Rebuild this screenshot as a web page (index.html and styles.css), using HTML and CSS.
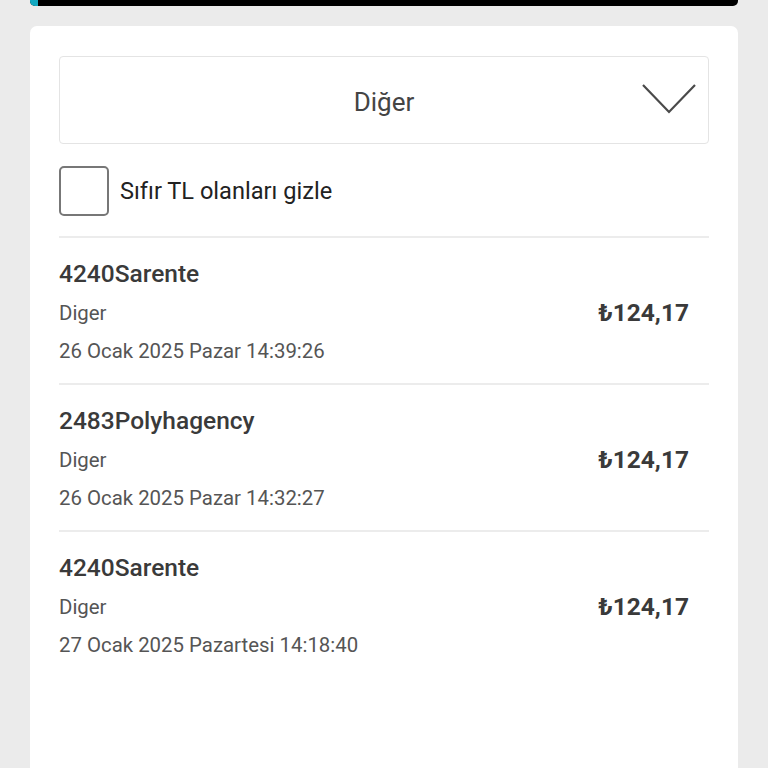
FILE: index.html
```html
<!DOCTYPE html>
<html lang="tr">
<head>
<meta charset="utf-8">
<link rel="stylesheet" href="styles.css">
</head>
<body>
<div class="page">
  <div class="topbar"><div class="topbar-fill"></div></div>
  <div class="card">
    <div class="select">
      <span class="select-text">Diğer</span>
      <svg class="chevron" width="54" height="30" viewBox="0 0 54 30"><path d="M1 1 L27 28 L53 1" fill="none" stroke="#4a4a4a" stroke-width="2.2"/></svg>
    </div>
    <label class="check-row">
      <span class="checkbox"></span>
      <span class="check-label">Sıfır TL olanları gizle</span>
    </label>
    <div class="list">
      <div class="item">
        <div class="info">
          <div class="title">4240Sarente</div>
          <div class="sub">Diger</div>
          <div class="date">26 Ocak 2025 Pazar 14:39:26</div>
        </div>
        <div class="amount">₺124,17</div>
      </div>
      <div class="item">
        <div class="info">
          <div class="title">2483Polyhagency</div>
          <div class="sub">Diger</div>
          <div class="date">26 Ocak 2025 Pazar 14:32:27</div>
        </div>
        <div class="amount">₺124,17</div>
      </div>
      <div class="item last">
        <div class="info">
          <div class="title">4240Sarente</div>
          <div class="sub">Diger</div>
          <div class="date">27 Ocak 2025 Pazartesi 14:18:40</div>
        </div>
        <div class="amount">₺124,17</div>
      </div>
    </div>
  </div>
</div>
</body>
</html>
```
FILE: styles.css
```css
html, body {
  margin: 0;
  padding: 0;
  background: #ebebeb;
  font-family: Roboto, "Liberation Sans", sans-serif;
  color: #333;
}
.page {
  width: 768px;
  height: 768px;
  overflow: hidden;
  padding: 0 30px;
  box-sizing: border-box;
}
.topbar {
  height: 6px;
  background: #000;
  border-radius: 0 0 5px 5px;
  overflow: hidden;
}
.topbar-fill {
  width: 8px;
  height: 100%;
  background: #12a8c0;
}
.card {
  margin-top: 20px;
  background: #fff;
  border-radius: 7px;
  padding: 30px 29px 40px;
  min-height: 760px;
  box-sizing: border-box;
}
.select {
  height: 88px;
  border: 1.5px solid #e4e4e4;
  border-radius: 4px;
  box-sizing: border-box;
  display: flex;
  align-items: center;
  justify-content: center;
  padding-top: 3px;
  position: relative;
}
.select-text {
  font-size: 26px;
  color: #444;
}
.chevron {
  position: absolute;
  right: 12px;
  top: 27px;
}
.check-row {
  display: flex;
  align-items: center;
  gap: 11px;
  margin-top: 22px;
}
.checkbox {
  width: 50px;
  height: 50px;
  box-sizing: border-box;
  border: 2px solid #777;
  border-radius: 5px;
}
.check-label {
  font-size: 23.6px;
  color: #222;
}
.list {
  margin-top: 20px;
  border-top: 2px solid #ececec;
}
.item {
  display: flex;
  align-items: center;
  justify-content: space-between;
  padding: 17px 20px 14px 0;
  border-bottom: 2px solid #ececec;
}
.item.last {
  border-bottom: none;
}
.title {
  font-size: 24.5px;
  font-weight: 500;
  line-height: 38px;
  color: #3a3a3a;
}
.sub, .date {
  font-size: 20.4px;
  color: #555;
}
.sub {
  line-height: 40px;
}
.date {
  line-height: 36px;
}
.amount {
  font-size: 24.5px;
  font-weight: 700;
  color: #3a3a3a;
}
```
